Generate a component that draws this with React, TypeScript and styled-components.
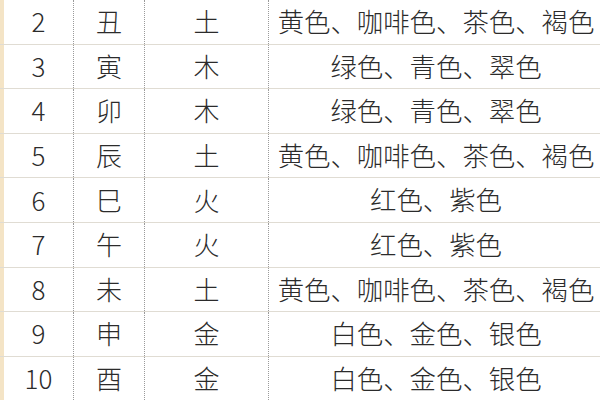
import React from "react"
import styled, { createGlobalStyle } from "styled-components"

const GlobalStyle = createGlobalStyle`
  html, body {
    margin: 0;
    padding: 0;
    background: #ffffff;
    overflow: hidden;
  }
`

const rows = [
  ["2", "丑", "土", "黄色、咖啡色、茶色、褐色"],
  ["3", "寅", "木", "绿色、青色、翠色"],
  ["4", "卯", "木", "绿色、青色、翠色"],
  ["5", "辰", "土", "黄色、咖啡色、茶色、褐色"],
  ["6", "巳", "火", "红色、紫色"],
  ["7", "午", "火", "红色、紫色"],
  ["8", "未", "土", "黄色、咖啡色、茶色、褐色"],
  ["9", "申", "金", "白色、金色、银色"],
  ["10", "酉", "金", "白色、金色、银色"]
]

const Table = styled.div`
  width: 600px;
  height: 400px;
  overflow: hidden;
  font-family: "Noto Sans CJK SC", "Noto Sans", sans-serif;
  font-weight: 300;
  color: #2b2b2b;
  background: #fff;
`

const Row = styled.div`
  display: grid;
  grid-template-columns: 73px 71px 124px 1fr;
  height: 44.6px;
  box-sizing: border-box;
  border-bottom: 1.5px solid #e0dcd3;
`

const Cell = styled.div<{ $first?: boolean; $wide?: boolean }>`
  display: flex;
  align-items: center;
  justify-content: center;
  box-sizing: border-box;
  font-size: ${(p) => (p.$wide ? "26.4px" : "26px")};
  line-height: 1;
  white-space: nowrap;
  padding-bottom: 1px;
  border-left: ${(p) => (p.$first ? "4px solid #f4e4c6" : "1px dotted #9a9a9a")};
  ${(p) => (p.$wide ? "padding-left: 3px;" : "")}
`

export default function App() {
  return (
    <>
      <GlobalStyle />
      <Table>
        {rows.map((r) => (
          <Row key={r[0]}>
            <Cell $first>{r[0]}</Cell>
            <Cell>{r[1]}</Cell>
            <Cell>{r[2]}</Cell>
            <Cell $wide>{r[3]}</Cell>
          </Row>
        ))}
      </Table>
    </>
  )
}
